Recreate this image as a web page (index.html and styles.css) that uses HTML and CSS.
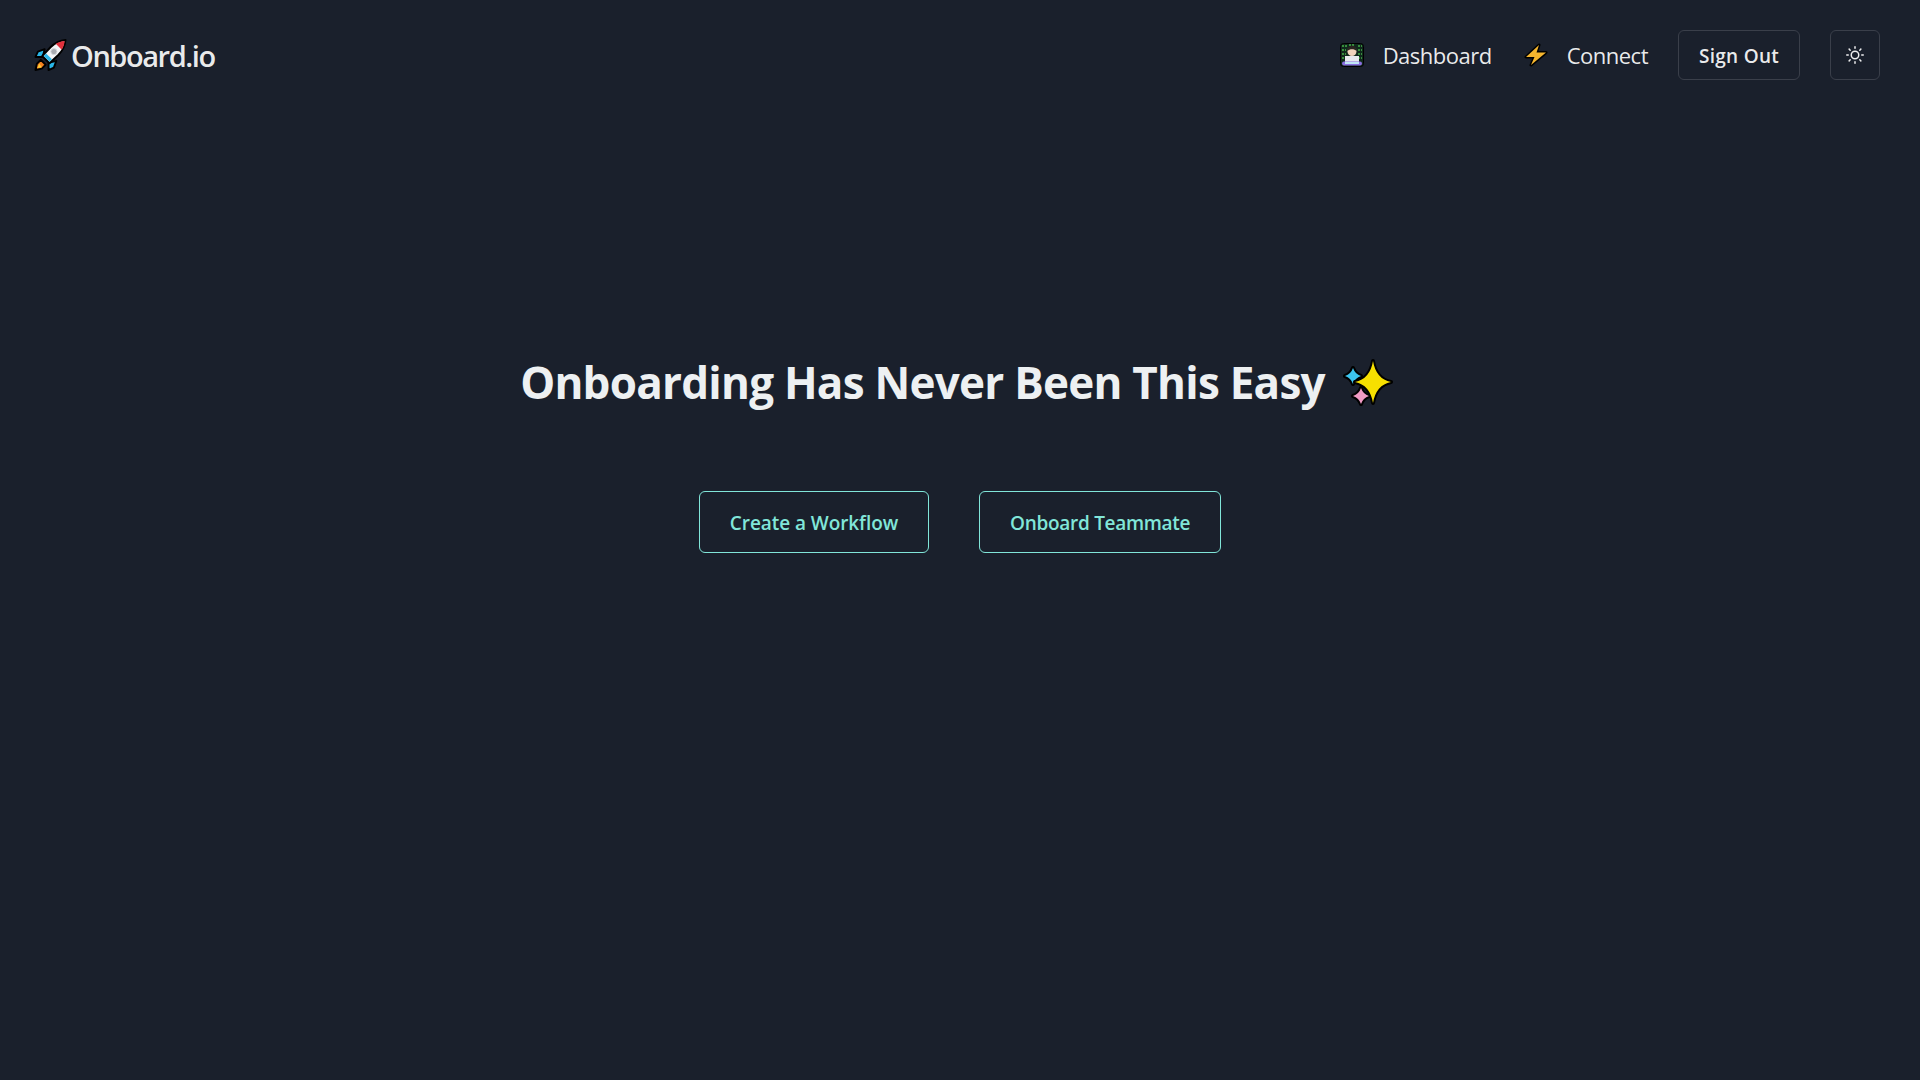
FILE: index.html
```html
<!DOCTYPE html>
<html>
<head>
  <title>Onboard.io</title>
  <link rel="stylesheet" href="styles.css">
</head>
<body>

  <header class="navbar">
    <a class="logo">
      <svg class="logo-icon" viewBox="0 0 34 34">
        <g stroke="#000" stroke-width="2" stroke-linejoin="round">
          <path d="M11 11L4 13.500 1.500 19 9 19z" fill="#29b6e8"/>
          <path d="M23 23L20.500 30 15 32.500 15 25z" fill="#29b6e8"/>
          <path d="M7 22L3 26 1.500 32.500 8 31 12 27z" fill="#f58220"/>
          <path d="M32.500 1.500C26 2 21 5 17 9L8.500 18 16 25.500 25 17C29 13 32 8 32.500 1.500z" fill="#f4f6f8"/>
        </g>
        <path d="M31.500 2.500C28 2.800 25 3.800 22.500 5.500L28.500 11.500C30.300 9 31.300 6 31.500 2.500z" fill="#e0303c"/>
        <path d="M10 18L16 24 18.500 21.500 12.500 15.500z" fill="#29b6e8"/>
        <circle cx="20.500" cy="13.500" r="3.200" fill="#a9adb2" stroke="#d8dbdf"/>
        <path d="M5.500 26L3.500 30.500 8 29.500z" fill="#fbd13a"/>
      </svg>
      <span>Onboard.io</span>
    </a>

    <nav class="nav-links">
      <a class="nav-link dashboard-link">
        <svg class="nav-icon" viewBox="0 0 24 24">
          <rect x="0.500" y="0.500" width="23" height="23" rx="3" fill="#10291c" stroke="#000"/>
          <path d="M2 3h5M2 7h4M2 11h4M2 15h3M18 3h4M18 7h4M18 11h4M18 15h4M9 2h6" stroke="#46b04a" stroke-width="1.500" stroke-dasharray="2 1"/>
          <circle cx="12" cy="8.500" r="4.500" fill="#f0d3bc"/>
          <path d="M7.500 8c-.5-7 9.500-7 9 0-2-2.500-7-2.500-9 0z" fill="#2a2420"/>
          <path d="M5 13h14v6H5z" fill="#e6e9ee"/>
          <rect x="2" y="18.500" width="20" height="4" rx="2" fill="#8a6ee0"/>
          <path d="M5 19h14v2H5z" fill="#bfe6f5"/>
        </svg>
        <span>Dashboard</span>
      </a>
      <a class="nav-link">
        <svg class="nav-icon" viewBox="0 0 24 24">
          <path d="M15 2L2 14h8.500L7 22 22 9.500h-9.500z" fill="#f5b52e" stroke="#000" stroke-width="3" stroke-linejoin="round" paint-order="stroke"/>
        </svg>
        <span>Connect</span>
      </a>
      <button class="sign-out">Sign Out</button>
      <button class="theme-btn" aria-label="Toggle theme">
        <svg class="sun" viewBox="0 0 24 24" fill="none" stroke="currentColor" stroke-width="2" stroke-linecap="round">
          <circle cx="12" cy="12" r="5"/>
          <path d="M12 1v2M12 21v2M4.200 4.200l1.400 1.400M18.400 18.400l1.400 1.400M1 12h2M21 12h2M4.200 19.800l1.400-1.400M18.400 5.600l1.400-1.400"/>
        </svg>
      </button>
    </nav>
  </header>

  <main class="hero">
    <h1>
      <span>Onboarding Has Never Been This Easy</span>
      <svg class="sparkles" viewBox="0 0 50 48">
        <g stroke="#000" stroke-width="4" stroke-linejoin="round" paint-order="stroke">
          <path d="M10 10Q12 16 18 18Q12 20 10 26Q8 20 2 18Q8 16 10 10z" fill="#3cc4ee"/>
          <path d="M18 30Q20 36 26 38Q20 40 18 46Q16 40 10 38Q16 36 18 30z" fill="#f09ac4"/>
          <path d="M30 3Q33 21 48 24Q33 27 30 45Q27 27 12 24Q27 21 30 3z" fill="#f7e000"/>
        </g>
      </svg>
    </h1>
    <div class="hero-actions">
      <button class="outline-btn create-btn">Create a Workflow</button>
      <button class="outline-btn">Onboard Teammate</button>
    </div>
  </main>

</body>
</html>
```
FILE: styles.css
```css
* {
  box-sizing: border-box;
}

body {
  margin: 0;
  min-height: 100vh;
  background-color: #1a202c;
  color: rgba(255, 255, 255, 0.92);
  font-family: "Open Sans", "Noto Sans", Arial, sans-serif;
}

button {
  font-family: inherit;
  background: transparent;
  cursor: pointer;
}

.navbar {
  display: flex;
  justify-content: space-between;
  align-items: center;
  padding: 30px 40px 0 34px;
}

.logo {
  display: flex;
  align-items: center;
  gap: 4px;
  font-size: 29px;
  font-weight: 600;
  letter-spacing: -1.45px;
}

.logo-icon {
  width: 33px;
  height: 34px;
}

.nav-links {
  display: flex;
  align-items: center;
}

.nav-link {
  display: flex;
  align-items: center;
  gap: 19px;
  margin-right: 30px;
  font-size: 22px;
  letter-spacing: -0.5px;
}

.dashboard-link {
  margin-right: 32px;
}

.nav-icon {
  width: 24px;
  height: 24px;
}

.sign-out {
  width: 122px;
  height: 50px;
  margin-right: 30px;
  padding-top: 2px;
  border: 1px solid #3a3f4a;
  border-radius: 6px;
  color: rgba(255, 255, 255, 0.92);
  font-size: 19px;
  font-weight: 600;
  letter-spacing: 0.3px;
}

.theme-btn {
  display: flex;
  align-items: center;
  justify-content: center;
  width: 50px;
  height: 50px;
  padding: 0;
  border: 1px solid #3a3f4a;
  border-radius: 6px;
  color: rgba(255, 255, 255, 0.92);
}

.sun {
  width: 18px;
  height: 18px;
}

.hero {
  display: flex;
  flex-direction: column;
  align-items: center;
  padding-top: 269px;
}

.hero h1 {
  display: flex;
  align-items: center;
  gap: 18px;
  height: 66px;
  margin: 0 7px 0 0;
  font-size: 44px;
  font-weight: 700;
  letter-spacing: -0.75px;
  color: #edf0f2;
}

.sparkles {
  width: 50px;
  height: 48px;
}

.hero-actions {
  display: flex;
  gap: 50px;
  margin-top: 76px;
}

.outline-btn {
  height: 62px;
  padding: 2px 30px 0;
  border: 1px solid #81e6d9;
  border-radius: 6px;
  color: #81e6d9;
  font-size: 19px;
  font-weight: 600;
  letter-spacing: -0.3px;
}

.create-btn {
  letter-spacing: -0.07px;
}
```
